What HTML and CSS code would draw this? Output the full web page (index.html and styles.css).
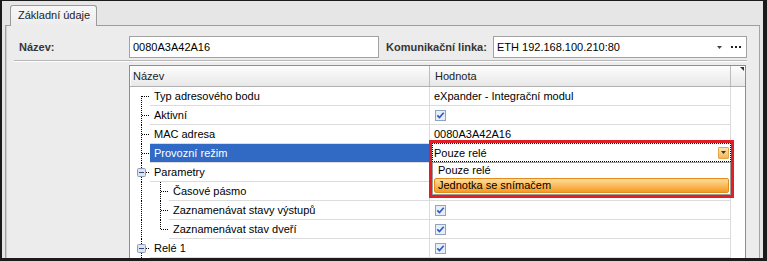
FILE: index.html
```html
<!DOCTYPE html>
<html lang="cs">
<head>
    <meta charset="UTF-8">
    <title>Základní údaje</title>
    <link rel="stylesheet" href="styles.css">
</head>
<body>
    <div class="frame">
        <div class="tabstrip">
            <div class="tab">Základní údaje</div>
        </div>

        <div class="panel">
            <!-- top form -->
            <div class="form-row">
                <label class="lbl lbl-name">Název:</label>
                <div class="field field-name">0080A3A42A16</div>
                <label class="lbl lbl-link">Komunikační linka:</label>
                <div class="field field-link">
                    <span class="field-text">ETH 192.168.100.210:80</span>
                    <svg class="drop-arrow" width="5" height="3" viewBox="0 0 5 3"><path d="M0 0h5L2.5 3z" fill="#444"/></svg>
                    <svg class="dots" width="10" height="2" viewBox="0 0 10 2"><rect x="0" y="0" width="2" height="2" fill="#222"/><rect x="4" y="0" width="2" height="2" fill="#222"/><rect x="8" y="0" width="2" height="2" fill="#222"/></svg>
                </div>
            </div>
            <div class="sep"></div>

            <!-- property grid -->
            <div class="grid">
                <div class="grid-head">
                    <div class="hcell hname">Název</div>
                    <div class="hcell hvalue">Hodnota</div>
                    <div class="hcorner"><span class="corner-mark"></span></div>
                </div>

                <div class="row">
                    <div class="gutter g-first"></div>
                    <div class="cell name">Typ adresového bodu</div>
                    <div class="cell value">eXpander - Integrační modul</div>
                </div>
                <div class="row">
                    <div class="gutter g-mid"></div>
                    <div class="cell name">Aktivní</div>
                    <div class="cell value">
                        <svg class="chk" width="11" height="11" viewBox="0 0 11 11"><rect x="0.5" y="0.5" width="10" height="10" fill="#e9eef6" stroke="#8fa4c3"/><path d="M2.3 5.3 4.5 7.6 8.7 2.8" fill="none" stroke="#2b5ec6" stroke-width="1.7"/></svg>
                    </div>
                </div>
                <div class="row">
                    <div class="gutter g-mid"></div>
                    <div class="cell name">MAC adresa</div>
                    <div class="cell value">0080A3A42A16</div>
                </div>
                <div class="row">
                    <div class="gutter g-mid"></div>
                    <div class="cell name selected">Provozní režim</div>
                    <div class="cell value">Pouze relé</div>
                </div>
                <div class="row">
                    <div class="gutter g-node">
                        <svg class="toggle" width="9" height="9" viewBox="0 0 9 9"><rect x="0.5" y="0.5" width="8" height="8" rx="1" fill="#dde4ee" stroke="#8a9db8"/><path d="M2 4.5h5" stroke="#2d4b7c"/></svg>
                    </div>
                    <div class="cell name">Parametry</div>
                    <div class="cell value"></div>
                </div>
                <div class="row">
                    <div class="gutter gutter-child g-child"></div>
                    <div class="cell name">Časové pásmo</div>
                    <div class="cell value"></div>
                </div>
                <div class="row">
                    <div class="gutter gutter-child g-child"></div>
                    <div class="cell name">Zaznamenávat stavy výstupů</div>
                    <div class="cell value">
                        <svg class="chk" width="11" height="11" viewBox="0 0 11 11"><rect x="0.5" y="0.5" width="10" height="10" fill="#e9eef6" stroke="#8fa4c3"/><path d="M2.3 5.3 4.5 7.6 8.7 2.8" fill="none" stroke="#2b5ec6" stroke-width="1.7"/></svg>
                    </div>
                </div>
                <div class="row">
                    <div class="gutter gutter-child g-child-last"></div>
                    <div class="cell name">Zaznamenávat stav dveří</div>
                    <div class="cell value">
                        <svg class="chk" width="11" height="11" viewBox="0 0 11 11"><rect x="0.5" y="0.5" width="10" height="10" fill="#e9eef6" stroke="#8fa4c3"/><path d="M2.3 5.3 4.5 7.6 8.7 2.8" fill="none" stroke="#2b5ec6" stroke-width="1.7"/></svg>
                    </div>
                </div>
                <div class="row">
                    <div class="gutter g-node">
                        <svg class="toggle" width="9" height="9" viewBox="0 0 9 9"><rect x="0.5" y="0.5" width="8" height="8" rx="1" fill="#dde4ee" stroke="#8a9db8"/><path d="M2 4.5h5" stroke="#2d4b7c"/></svg>
                    </div>
                    <div class="cell name">Relé 1</div>
                    <div class="cell value">
                        <svg class="chk" width="11" height="11" viewBox="0 0 11 11"><rect x="0.5" y="0.5" width="10" height="10" fill="#e9eef6" stroke="#8fa4c3"/><path d="M2.3 5.3 4.5 7.6 8.7 2.8" fill="none" stroke="#2b5ec6" stroke-width="1.7"/></svg>
                    </div>
                </div>

                <!-- open combo editor, marked in red -->
                <div class="editor">
                    <div class="combo">
                        <span>Pouze relé</span>
                        <span class="combo-btn">
                            <svg width="5" height="3" viewBox="0 0 5 3"><path d="M0 0h5L2.5 3z" fill="#333"/></svg>
                        </span>
                    </div>
                    <div class="combo-list">
                        <div class="item">Pouze relé</div>
                        <div class="item item-hot">Jednotka se snímačem</div>
                    </div>
                </div>
            </div>
        </div>
    </div>
</body>
</html>
```

FILE: styles.css
```css
* {
    box-sizing: border-box;
}
body {
    margin: 0;
    font-family: "Liberation Sans", Arial, sans-serif;
    font-size: 11px;
    color: #000;
    background: #e6e6e6;
}
.frame {
    width: 767px;
    height: 261px;
    border-style: solid;
    border-color: #1b1b1b;
    border-width: 1px 4px 3px 2px;
    background: #e6e6e6;
    overflow: hidden;
    display: flex;
    flex-direction: column;
}

/* tab */
.tabstrip {
    flex: none;
    height: 25px;
    margin: 0 3px;
    padding: 4px 0 0 5px;
    border-bottom: 1px solid #9d9d9d;
    display: flex;
    align-items: flex-start;
}
.tab {
    width: 87px;
    height: 21px;
    padding-left: 7px;
    line-height: 19px;
    color: #222;
    border: 1px solid #9a9a9a;
    border-bottom: none;
    border-radius: 3px 3px 0 0;
    background: linear-gradient(#f7f7f7, #ececec);
}

/* panel */
.panel {
    flex: 1;
    min-height: 0;
    margin: 0 3px;
    border-left: 1px solid #a3a3a3;
    border-right: 1px solid #a3a3a3;
    background: #ececec;
    box-shadow: inset 1px 0 0 #cfcfcf;
    display: flex;
    flex-direction: column;
}
.form-row {
    flex: none;
    display: flex;
    align-items: center;
    height: 22px;
    margin-top: 10px;
    padding: 0 12px 0 13px;
}
.lbl {
    font-weight: bold;
    color: #363636;
    flex: none;
}
.lbl-name {
    width: 110px;
}
.lbl-link {
    width: 107px;
    margin-left: 7px;
}
.field {
    height: 22px;
    border: 1px solid #a2a2a2;
    background: #fff;
    padding-left: 3px;
    line-height: 20px;
    display: flex;
    align-items: center;
}
.field-name {
    width: 250px;
    flex: none;
}
.field-link {
    flex: 1;
}
.field-text {
    flex: 1;
}
.drop-arrow {
    margin-right: 9px;
}
.dots {
    margin-right: 5px;
}
.sep {
    flex: none;
    height: 2px;
    margin: 2px 12px 0 8px;
    border-top: 1px solid #b7b7b7;
    border-bottom: 1px solid #fff;
}

/* grid */
.grid {
    flex: 1;
    width: 617px;
    margin: 3px 0 0 123px;
    border: 1px solid #8e8e8e;
    border-bottom: none;
    background: #fff;
    position: relative;
}
.grid-head {
    display: flex;
    height: 21px;
    border-bottom: 1px solid #b0b0b0;
    background: linear-gradient(#fdfdfd, #e8e8e8);
}
.hcell {
    line-height: 20px;
    color: #222;
    border-right: 1px solid #bcbcbc;
}
.hname {
    width: 300px;
    padding-left: 3px;
    box-shadow: inset 1px 0 0 #fff;
}
.hvalue {
    width: 301px;
    padding-left: 5px;
}
.hcorner {
    flex: 1;
    display: flex;
    justify-content: flex-end;
    padding: 1px 1px 0 0;
}
.corner-mark {
    width: 0;
    height: 0;
    border-top: 4px solid #333;
    border-left: 4px solid transparent;
}

.row {
    display: flex;
    width: 601px;
    height: 19px;
}
.gutter {
    flex: none;
    width: 20px;
    display: flex;
    align-items: center;
    background-repeat: no-repeat;
}
.gutter-child {
    width: 39px;
}
.g-first {
    background-image:
        repeating-linear-gradient(to bottom, #000 0 1px, transparent 1px 2px),
        repeating-linear-gradient(to right, #000 0 1px, transparent 1px 2px);
    background-size: 1px 10px, 8px 1px;
    background-position: 11px 9px, 12px 9px;
}
.g-mid {
    background-image:
        repeating-linear-gradient(to bottom, #000 0 1px, transparent 1px 2px),
        repeating-linear-gradient(to right, #000 0 1px, transparent 1px 2px);
    background-size: 1px 100%, 8px 1px;
    background-position: 11px 0, 12px 9px;
}
.g-node {
    background-image:
        repeating-linear-gradient(to bottom, #000 0 1px, transparent 1px 2px),
        repeating-linear-gradient(to right, #000 0 1px, transparent 1px 2px);
    background-size: 1px 100%, 4px 1px;
    background-position: 11px 0, 16px 9px;
}
.toggle {
    margin-left: 7px;
}
.g-child {
    background-image:
        repeating-linear-gradient(to bottom, #000 0 1px, transparent 1px 2px),
        repeating-linear-gradient(to bottom, #000 0 1px, transparent 1px 2px),
        repeating-linear-gradient(to right, #000 0 1px, transparent 1px 2px);
    background-size: 1px 100%, 1px 100%, 8px 1px;
    background-position: 11px 0, 30px 0, 31px 9px;
}
.g-child-last {
    background-image:
        repeating-linear-gradient(to bottom, #000 0 1px, transparent 1px 2px),
        repeating-linear-gradient(to bottom, #000 0 1px, transparent 1px 2px),
        repeating-linear-gradient(to right, #000 0 1px, transparent 1px 2px);
    background-size: 1px 100%, 1px 10px, 8px 1px;
    background-position: 11px 0, 30px 0, 31px 9px;
}
.cell {
    height: 19px;
    line-height: 18px;
    border-bottom: 1px solid #dcdcdc;
    white-space: nowrap;
}
.name {
    flex: 1;
    padding-left: 4px;
}
.name.selected {
    background: #316ac5;
    color: #fff;
}
.value {
    flex: none;
    width: 302px;
    padding-left: 4px;
    border-left: 1px solid #dcdcdc;
    border-right: 1px solid #dcdcdc;
    display: flex;
    align-items: center;
}
.chk {
    margin-left: 1px;
}

/* open editor */
.editor {
    position: absolute;
    left: 299px;
    top: 74px;
    width: 305px;
    height: 58px;
    border: 3px solid #e01f27;
    background: #fff;
}
.combo {
    height: 19px;
    border: 1px dotted #000;
    padding-left: 1px;
    display: flex;
    align-items: center;
    justify-content: space-between;
}
.combo-btn {
    width: 11px;
    height: 12px;
    margin-right: 1px;
    border: 1px solid #e3a54a;
    border-radius: 1px;
    background: linear-gradient(#fde6b4, #f6b554);
    display: flex;
    align-items: center;
    justify-content: center;
}
.combo-list {
    height: 33px;
    border: 1px solid #9c9c9c;
    padding: 0 1px;
}
.item {
    height: 15px;
    line-height: 15px;
    padding-left: 4px;
}
.item-hot {
    border: 1px solid #e38b1d;
    border-radius: 2px;
    line-height: 13px;
    padding-left: 3px;
    background: linear-gradient(#fedc9c, #fbb956 55%, #f49a24);
}
```
